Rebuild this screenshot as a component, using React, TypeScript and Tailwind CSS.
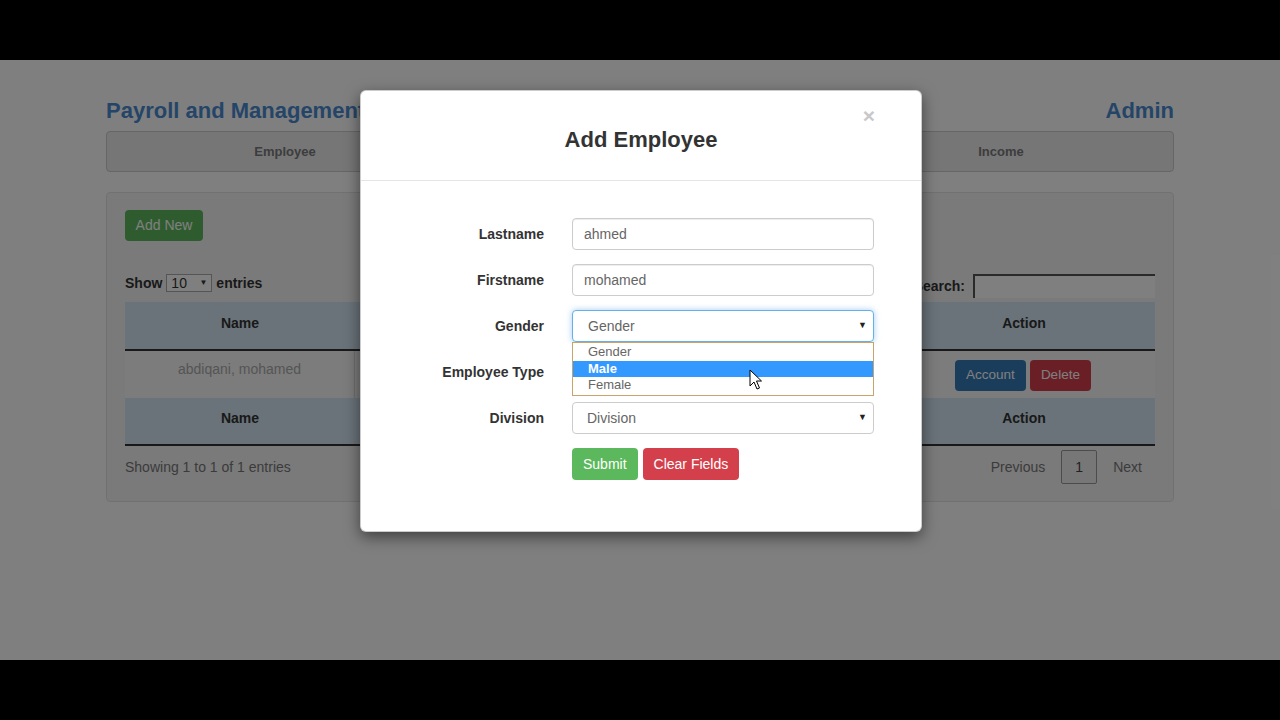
import React from "react";

const font = { fontFamily: '"Liberation Sans", Arial, sans-serif' };

// Form row inside the modal
const FormRow = ({ label, children }: { label: string; children: React.ReactNode }) => (
  <div className="flex items-center h-[32px] mb-[14px]">
    <label className="w-[183px] text-right text-[14px] font-bold text-[#333]">{label}</label>
    <div className="ml-[28px] w-[302px] h-full relative">{children}</div>
  </div>
);

const TextInput = ({ value }: { value: string }) => (
  <div className="h-full w-full rounded-[4px] border border-[#ccc] bg-white px-[11px] flex items-center text-[14px] text-[#666] shadow-[inset_0_1px_1px_rgba(0,0,0,0.075)]">
    {value}
  </div>
);

const SelectBox = ({ value, focused }: { value: string; focused?: boolean }) => (
  <div
    className={
      focused
        ? "h-full w-full rounded-[4px] border border-[#66afe9] bg-white pl-[15px] pr-[6px] flex items-center justify-between text-[14px] text-[#666] shadow-[0_0_6px_rgba(102,175,233,0.6)]"
        : "h-full w-full rounded-[4px] border border-[#ccc] bg-white pl-[14px] pr-[6px] flex items-center justify-between text-[14px] text-[#666]"
    }
  >
    <span>{value}</span>
    <span className="text-[9px] text-[#222]">▼</span>
  </div>
);

const Cursor = () => (
  <svg width="14" height="22" viewBox="0 0 14 22" className="absolute z-30 left-[749px] top-[309px]">
    <path d="M1 1 L1 17 L5 13 L8 20 L10.5 19 L7.5 12 L12.5 12 Z" fill="#fff" stroke="#000" strokeWidth="1" strokeLinejoin="round" />
  </svg>
);

const App = () => {
  return (
    <div className="w-[1280px] h-[720px] bg-black flex flex-col overflow-hidden" style={font}>
      <div className="h-[60px] shrink-0" />
      <div className="h-[600px] shrink-0 relative bg-white overflow-hidden">
        {/* Page behind the modal */}
        <div className="mx-[106px] pt-[38px]">
          <div className="flex justify-between items-center h-[26px]">
            <h1 className="text-[22px] leading-[26px] font-bold text-[#4a8bd0]">Payroll and Management System</h1>
            <span className="text-[22px] leading-[26px] font-bold text-[#4a8bd0]">Admin</span>
          </div>
          <div className="mt-[7px] h-[41px] rounded-[4px] border border-[#ccc] bg-[#ececec] grid grid-cols-[356px_1fr_344px] text-[13px] font-bold text-[#7a7a7a]">
            <div className="flex items-center justify-center">Employee</div>
            <div className="flex items-center justify-center">Deductions</div>
            <div className="flex items-center justify-center">Income</div>
          </div>
          <div className="mt-[20px] h-[310px] border border-[#e3e3e3] bg-[#f5f5f5] rounded-[4px] px-[18px] pt-[17px]">
            <button className="h-[31px] w-[78px] rounded-[4px] bg-[#5cb85c] text-white text-[14px]">Add New</button>
            <div className="mt-[33px] flex justify-between items-start h-[24px]">
              <div className="flex items-center h-[18px] gap-[4px] text-[14px] font-bold text-[#333]">
                <span>Show</span>
                <div className="w-[46px] h-[18px] border border-[#aaa] bg-white flex items-center justify-between px-[4px] font-normal">
                  <span>10</span>
                  <span className="text-[8px]">▼</span>
                </div>
                <span>entries</span>
              </div>
              <div className="flex items-center gap-[8px] h-[24px] text-[14px] font-bold text-[#333]">
                <span>Search:</span>
                <div className="w-[182px] h-[24px] bg-white border-t-2 border-l-2 border-[#555]" />
              </div>
            </div>
            <div className="mt-[4px] text-[14px]">
              <div className="grid grid-cols-[230px_268px_268px_266px] h-[49px] bg-[#d4e6f4] border-b-2 border-[#333] font-bold text-[#333]">
                <div className="text-center pt-[11px]">Name</div>
                <div className="text-center pt-[11px]">Employee Type</div>
                <div className="text-center pt-[11px]">Division</div>
                <div className="text-center pt-[11px]">Action</div>
              </div>
              <div className="grid grid-cols-[230px_268px_268px_266px] h-[47px] bg-[#f9f9f9] text-[#aaa]">
                <div className="text-center pt-[8px] border-r border-[#ddd]">abdiqani, mohamed</div>
                <div className="text-center pt-[8px]">Regular</div>
                <div className="text-center pt-[8px]">Finance</div>
                <div className="flex justify-center items-start gap-[4px] pt-[9px] pr-[2px]">
                  <button className="h-[31px] px-[11px] rounded-[4px] bg-[#337ab7] text-white text-[13.5px]">Account</button>
                  <button className="h-[31px] px-[11px] rounded-[4px] bg-[#d43f4c] text-white text-[13.5px]">Delete</button>
                </div>
              </div>
              <div className="grid grid-cols-[230px_268px_268px_266px] h-[48px] bg-[#d4e6f4] border-b-2 border-[#333] font-bold text-[#333]">
                <div className="text-center pt-[10px]">Name</div>
                <div className="text-center pt-[10px]">Employee Type</div>
                <div className="text-center pt-[10px]">Division</div>
                <div className="text-center pt-[10px]">Action</div>
              </div>
            </div>
            <div className="mt-[4px] h-[34px] flex justify-between items-center text-[14px] text-[#777]">
              <span>Showing 1 to 1 of 1 entries</span>
              <div className="flex items-center h-full pr-[13px]">
                <span>Previous</span>
                <div className="ml-[16px] w-[36px] h-[34px] border border-[#999] rounded-[2px] bg-[#eee] flex items-center justify-center text-[#444]">1</div>
                <span className="ml-[16px]">Next</span>
              </div>
            </div>
          </div>
        </div>

        {/* Backdrop */}
        <div className="absolute inset-0 bg-black/50" />

        {/* Modal */}
        <div className="absolute left-[360px] top-[30px] w-[562px] bg-white rounded-[6px] border border-black/20 shadow-[0_5px_15px_rgba(0,0,0,0.5)]">
          <div className="relative h-[90px] border-b border-[#e5e5e5] flex items-center justify-center">
            <h4 className="text-[22px] font-bold text-[#333] mt-[8px]">Add Employee</h4>
            <span className="absolute right-[46px] top-[14px] text-[21px] font-bold text-[#c8c8c8] leading-none">×</span>
          </div>
          <div className="pt-[37px] pb-[51px]">
            <FormRow label="Lastname">
              <TextInput value="ahmed" />
            </FormRow>
            <FormRow label="Firstname">
              <TextInput value="mohamed" />
            </FormRow>
            <FormRow label="Gender">
              <SelectBox value="Gender" focused />
              <div className="absolute left-0 top-full w-full z-10 bg-white border border-[#c9a36a] py-[1px] text-[13px] leading-[16.5px] text-[#666]">
                <div className="pl-[15px]">Gender</div>
                <div className="pl-[15px] bg-[#3399ff] text-white font-bold">Male</div>
                <div className="pl-[15px]">Female</div>
              </div>
            </FormRow>
            <FormRow label="Employee Type">
              <SelectBox value="Employee Type" />
            </FormRow>
            <FormRow label="Division">
              <SelectBox value="Division" />
            </FormRow>
            <div className="ml-[211px] flex gap-[5px]">
              <button className="h-[32px] px-[11px] rounded-[4px] bg-[#5cb85c] text-white text-[14px]">Submit</button>
              <button className="h-[32px] px-[11px] rounded-[4px] bg-[#d43f4c] text-white text-[14px]">Clear Fields</button>
            </div>
          </div>
        </div>

        <Cursor />
      </div>
      <div className="h-[60px] shrink-0" />
    </div>
  );
};

export default App;
